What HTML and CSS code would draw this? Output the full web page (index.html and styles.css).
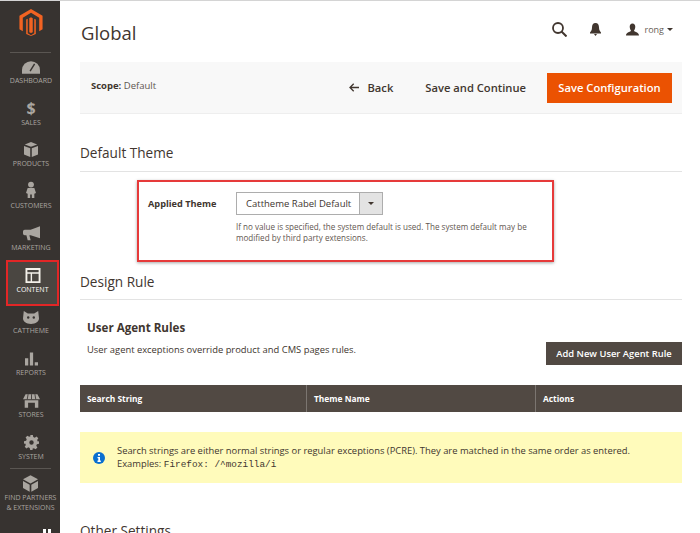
FILE: index.html
```html
<!DOCTYPE html>
<html lang="en">
<head>
  <meta charset="UTF-8" />
  <title>Global</title>
  <link rel="stylesheet" href="styles.css">
</head>
<body>

<div class="page">
  <nav class="sidebar">
    <div class="logo">
      <svg width="24" height="27" viewBox="0 0 24 28"><path fill="#f26322" d="M12 0 L24 7 V21 L20.5 23 V9 L12 4 L3.5 9 V23 L0 21 V7 Z M10.2 9.5 L12 8.5 L13.8 9.5 V24 L12 25 L10.2 24 Z M7 11 L8.6 10 V25.2 L12 27.2 L15.4 25.2 V10 L17 11 V26 L12 28 L7 26 Z"/></svg>
    </div>
    <ul class="menu">
      <li class="menu-item">
        <svg width="18" height="13" viewBox="0 0 20 14"><path fill="#aaa6a0" d="M10 0a10 10 0 0 1 10 10v4H0v-4A10 10 0 0 1 10 0z"/><path stroke="#373330" stroke-width="1.6" d="M9 11 14 3"/></svg>
        <span>DASHBOARD</span>
      </li>
      <li class="menu-item">
        <span class="glyph">$</span>
        <span>SALES</span>
      </li>
      <li class="menu-item">
        <svg width="14" height="15" viewBox="0 0 18 19"><path fill="#aaa6a0" d="M9 0l8 3-8 3-8-3zM0 5l8 3v11l-8-3zM18 5v11l-8 3V8z"/></svg>
        <span>PRODUCTS</span>
      </li>
      <li class="menu-item">
        <svg width="10" height="18" viewBox="0 0 12 20"><circle cx="6" cy="3.5" r="3.5" fill="#aaa6a0"/><path fill="#aaa6a0" d="M2 7.5h8l2 6-2 1v5H7v-4H5v4H2v-5l-2-1z"/></svg>
        <span>CUSTOMERS</span>
      </li>
      <li class="menu-item">
        <svg width="17" height="15" viewBox="0 0 20 17"><path fill="#aaa6a0" d="M20 0v14L9 10.500H7.500l1.500 6H5.500l-1.500-6H2a2 2 0 0 1-2-2V6a2 2 0 0 1 2-2h7z"/></svg>
        <span>MARKETING</span>
      </li>
      <li class="menu-item active">
        <svg width="16" height="15" viewBox="0 0 16 16"><path fill="#f4f1ea" fill-rule="evenodd" d="M0 0h16v16H0zM2 2v2.500h12V2zM2 6v8h3.500V6zM7 6v8h7V6z"/></svg>
        <span>CONTENT</span>
      </li>
      <li class="menu-item">
        <svg width="16" height="13" viewBox="0 0 20 16"><path fill="#aaa6a0" d="M1 0l5 3h8l5-3 1 9c0 4-4 7-10 7S0 13 0 9z"/><circle cx="6.500" cy="8" r="1.500" fill="#373330"/><circle cx="13.500" cy="8" r="1.500" fill="#373330"/></svg>
        <span>CATTHEME</span>
      </li>
      <li class="menu-item">
        <svg width="13" height="14" viewBox="0 0 16 16"><path fill="#aaa6a0" d="M0 7h4v9H0zM6 0h4v16H6zM12 12h4v4h-4z"/></svg>
        <span>REPORTS</span>
      </li>
      <li class="menu-item">
        <svg width="17" height="14" viewBox="0 0 20 16"><path fill="#aaa6a0" d="M3 0h14l3 6H0zM2 7h16v9h-4v-6H6v6H2z"/><path stroke="#373330" d="M6 0 5 6M10 0v6M14 0l1 6"/></svg>
        <span>STORES</span>
      </li>
      <li class="menu-item">
        <svg width="15" height="15" viewBox="0 0 17 17"><path fill="#aaa6a0" fill-rule="evenodd" d="M7 0h3l.5 2.400 1.700.7 2-1.300 2 2-1.300 2 .7 1.700L17 7v3l-2.400.5-.7 1.700 1.300 2-2 2-2-1.300-1.700.7L9.900 17H7l-.5-2.400-1.700-.7-2 1.300-2-2 1.300-2-.7-1.700L0 10V7l2.400-.5.700-1.700-1.300-2 2-2 2 1.300 1.700-.7zM8.500 6a2.500 2.500 0 1 0 0 5 2.500 2.500 0 0 0 0-5z"/></svg>
        <span>SYSTEM</span>
      </li>
      <li class="menu-item partners">
        <svg width="15" height="17" viewBox="0 0 18 20"><path fill="#aaa6a0" d="M9 0l9 5-9 5-9-5zM0 7l8 4.500V20l-8-4.500zM18 7v8.500L10 20v-8.500z"/></svg>
        <span>FIND PARTNERS<br>&amp; EXTENSIONS</span>
      </li>
    </ul>
    <div class="collapse-bars"><i></i><i></i></div>
  </nav>

  <main class="content">
    <header class="top">
      <h1>Global</h1>
      <div class="top-tools">
        <svg width="15" height="15" viewBox="0 0 15 15"><circle cx="6" cy="6" r="5" fill="none" stroke="#41362f" stroke-width="1.800"/><path stroke="#41362f" stroke-width="2" d="M9.500 9.500 14.500 14.500"/></svg>
        <svg class="bell" width="11" height="13" viewBox="0 0 11 13"><path fill="#41362f" d="M5.500 0C8 0 9 2 9 4.500c0 2.500 1 3.500 2 5v1H0v-1c1-1.500 2-2.500 2-5C2 2 3 0 5.500 0zM4 11h3l-1.500 2z"/></svg>
        <div class="user">
          <svg width="13" height="13" viewBox="0 0 14 13"><path fill="#41362f" d="M7 0c2 0 3 1.500 3 3.500S9 7 8.500 8c1.500 1 5.500 1.500 5.500 5H0c0-3.500 4-4 5.500-5C5 7 4 5.500 4 3.500S5 0 7 0z"/></svg>
          <span>rong</span>
          <i class="caret"></i>
        </div>
      </div>
    </header>

    <div class="actions">
      <div class="scope"><b>Scope:</b> Default</div>
      <div class="back">
        <svg width="10" height="9" viewBox="0 0 10 9"><path fill="none" stroke="#41362f" stroke-width="1.300" d="M10 4.500H1M4.700.8 1 4.500l3.700 3.700"/></svg>
        Back
      </div>
      <div class="save-continue">Save and Continue</div>
      <button class="btn-primary">Save Configuration</button>
    </div>

    <h2 class="section section-theme">Default Theme</h2>
    <div class="highlight">
      <label>Applied Theme</label>
      <div class="field">
        <div class="select">
          <span>Cattheme Rabel Default</span>
          <i class="select-arrow"><i class="caret"></i></i>
        </div>
        <p>If no value is specified, the system default is used. The system default may be modified by third party extensions.</p>
      </div>
    </div>

    <h2 class="section section-design">Design Rule</h2>

    <h3>User Agent Rules</h3>
    <div class="rule-row">
      <p>User agent exceptions override product and CMS pages rules.</p>
      <button class="btn-dark">Add New User Agent Rule</button>
    </div>

    <table class="rules">
      <thead>
        <tr>
          <th class="col-search">Search String</th>
          <th class="col-theme">Theme Name</th>
          <th>Actions</th>
        </tr>
      </thead>
    </table>

    <div class="notice">
      <svg width="12" height="12" viewBox="0 0 12 12"><circle cx="6" cy="6" r="6" fill="#0a6fd0"/><path fill="#fff" d="M5 2h2v1.800H5zM4.500 5H7v3.500h.8V10H4.500V8.500h.8V6.300h-.8z"/></svg>
      <p>Search strings are either normal strings or regular exceptions (PCRE). They are matched in the same order as entered.<br>Examples: <code>Firefox: /^mozilla/i</code></p>
    </div>

    <h2 class="section section-other">Other Settings</h2>
  </main>
</div>

</body>
</html>
```

FILE: styles.css
```css
html, body {
  margin: 0;
  height: 100%;
  overflow: hidden;
}

body {
  font-family: "Open Sans", Arial, sans-serif;
  color: #41362f;
  background: #fff;
}

.page {
  display: flex;
  height: 533px;
  overflow: hidden;
  border-top: 1px solid #d4d4d4;
  box-sizing: border-box;
}

/* sidebar */
.sidebar {
  flex: 0 0 60px;
  width: 60px;
  min-width: 0;
  background: #373330;
}

.logo {
  display: flex;
  justify-content: center;
  padding: 8px 0 0 2px;
  height: 43px;
}

.menu {
  list-style: none;
  margin: 0 9px 0 10px;
  padding: 0;
  border-top: 1px solid #5a5652;
}

.menu-item {
  display: flex;
  flex-direction: column;
  align-items: center;
  justify-content: flex-end;
  height: 41.700px;
  margin: 0 -9px 0 -10px;
  padding-left: 2px;
  font-size: 7px;
  line-height: 11px;
  color: #aaa6a0;
  text-align: center;
  gap: 1px;
}

.menu-item:first-child {
  height: 33px;
}

.glyph {
  font-size: 16px;
  line-height: 16px;
  font-weight: 700;
}

.active {
  margin: 7px -8px -11px -4px;
  padding-left: 0;
  height: 46px;
  box-sizing: border-box;
  border: 2px solid #e22626;
  background: #4a4641;
  color: #fff;
  padding-bottom: 9px;
}

.partners {
  margin: 6px 0 0;
  padding-left: 0;
  height: 44px;
  line-height: 10px;
  border-top: 1px solid #5a5652;
  white-space: nowrap;
}

.collapse-bars {
  display: flex;
  justify-content: flex-end;
  align-items: flex-start;
  gap: 2px;
  margin-top: 16px;
  padding-right: 9px;
}

.collapse-bars i {
  width: 3px;
  height: 10px;
  background: #fff;
}

/* main */
.content {
  flex: 1;
  padding: 0 18px 0 20px;
  min-width: 0;
}

.top {
  display: flex;
  justify-content: space-between;
  align-items: center;
  height: 61px;
}

h1 {
  margin: 2px 0 0 1px;
  font-size: 18.500px;
  font-weight: 400;
}

.top-tools {
  display: flex;
  align-items: center;
  padding: 0 9px 4px 0;
}

.bell {
  margin-left: 23px;
}

.user {
  display: flex;
  align-items: center;
  margin-left: 25px;
  font-size: 9px;
  color: #676056;
  gap: 6px;
}

.user .caret {
  margin-left: -3px;
}

.caret {
  display: inline-block;
  border: 3px solid transparent;
  border-top: 3px solid #41362f;
  border-bottom: 0;
}

.actions {
  display: flex;
  align-items: center;
  height: 52px;
  background: #f8f8f8;
  border-bottom: 1px solid #eee;
  box-sizing: border-box;
  padding: 0 10px 0 11px;
  font-size: 11.200px;
  font-weight: 600;
}

.scope {
  flex: 1;
  font-size: 9.500px;
  font-weight: 400;
  color: #5f564f;
  padding-bottom: 4px;
}

.scope b {
  font-weight: 700;
  color: #41362f;
}

.back {
  display: flex;
  align-items: center;
  gap: 9px;
  margin-right: 32px;
}

.save-continue {
  margin-right: 21px;
}

button {
  font-family: inherit;
  border: 0;
  cursor: pointer;
}

.btn-primary {
  height: 30px;
  width: 125px;
  padding: 0;
  background: #eb5202;
  color: #fff;
  font-size: 11.200px;
  font-weight: 600;
}

.section {
  margin: 0;
  font-size: 13.600px;
  font-weight: 400;
  line-height: 18px;
  padding: 30px 0 8px;
  border-bottom: 1px solid #e3e3e3;
}

.section-theme {
  padding-bottom: 9px;
}

.highlight {
  display: flex;
  width: 417px;
  height: 82px;
  box-sizing: border-box;
  margin: 8px 0 0 57px;
  padding: 10px 0 0 9px;
  border: 2px solid #e63a3a;
  box-shadow: 0 1px 3px rgba(0, 0, 0, 0.35);
}

.highlight label {
  flex: 0 0 88px;
  font-size: 9.200px;
  font-weight: 700;
  padding-top: 5px;
}

.field p {
  margin: 6px 0 0;
  width: 295px;
  line-height: 11px;
  font-size: 8.100px;
  color: #5f564f;
}

.select {
  display: flex;
  width: 147px;
  height: 23px;
  box-sizing: border-box;
  border: 1px solid #adadad;
  font-size: 9.500px;
  line-height: 21px;
}

.select span {
  flex: 1;
  padding-left: 9px;
  white-space: nowrap;
}

.select-arrow {
  display: flex;
  align-items: center;
  justify-content: center;
  width: 22px;
  background: #e3e3e3;
  border-left: 1px solid #adadad;
}

.section-design {
  padding-top: 11px;
}

h3 {
  margin: 20px 0 0 7px;
  font-size: 11.600px;
  font-weight: 700;
  line-height: 15px;
}

.rule-row {
  display: flex;
  justify-content: space-between;
  padding-left: 7px;
  font-size: 9.400px;
}

.rule-row p {
  margin: 8px 0 0;
  line-height: 13px;
}

.btn-dark {
  height: 23px;
  width: 136px;
  margin-top: 7px;
  background: #514943;
  color: #fff;
  font-size: 9.400px;
  font-weight: 600;
  padding: 0;
}

.rules {
  width: 100%;
  margin-top: 20px;
  border-collapse: collapse;
  table-layout: fixed;
}

.rules th {
  height: 27px;
  padding: 0 7px;
  background: #514943;
  color: #fff;
  text-align: left;
  font-size: 8.400px;
  font-weight: 700;
  border-left: 1px solid #7b7570;
}

.rules th:first-child {
  border-left: 0;
}

.col-search {
  width: 212px;
}

.col-theme {
  width: 214px;
}

.notice {
  display: flex;
  align-items: center;
  height: 51px;
  margin-top: 20px;
  padding-left: 13px;
  background: #fffbbb;
  gap: 12px;
  color: #41362f;
}

.notice p {
  margin: 0;
  font-size: 9.400px;
  line-height: 13px;
  white-space: nowrap;
}

.notice code {
  font-family: "Liberation Mono", monospace;
  font-size: 9.400px;
}

.section-other {
  padding-top: 39px;
}
```
